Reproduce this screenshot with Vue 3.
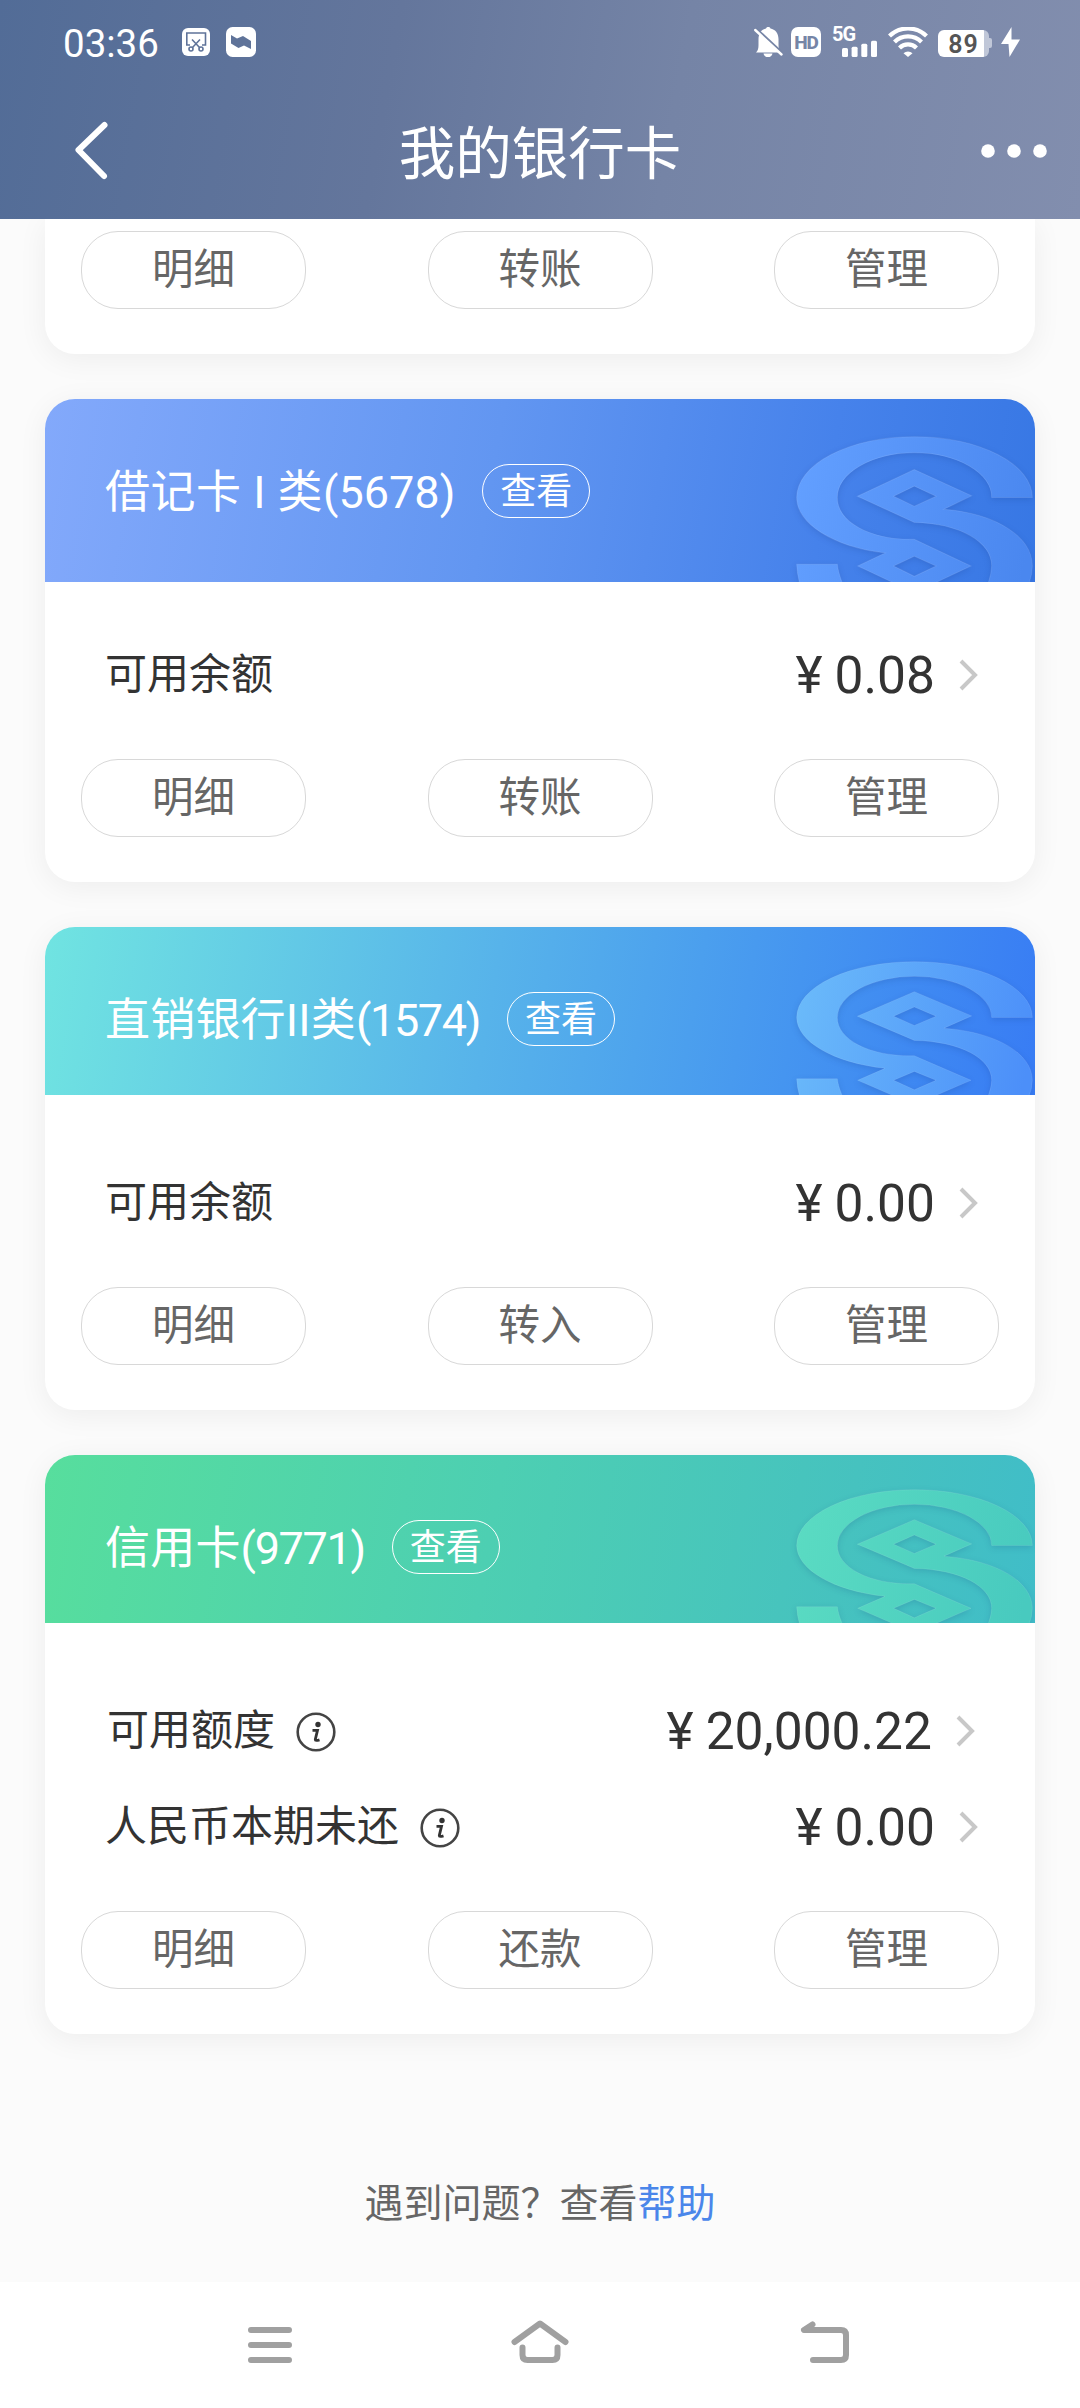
<script setup>
const cards = [
  {
    id: 'debit',
    name: '借记卡 I 类',
    number: '(5678)',
    theme: 'blue',
    rows: [{ label: '可用余额', amount: '0.08' }],
    actions: ['明细', '转账', '管理'],
  },
  {
    id: 'direct',
    name: '直销银行II类',
    number: '(1574)',
    theme: 'cyan',
    rows: [{ label: '可用余额', amount: '0.00' }],
    actions: ['明细', '转入', '管理'],
  },
  {
    id: 'credit',
    name: '信用卡',
    number: '(9771)',
    theme: 'green',
    rows: [
      { label: '可用额度', amount: '20,000.22', info: true, inset: true },
      { label: '人民币本期未还', amount: '0.00', info: true },
    ],
    actions: ['明细', '还款', '管理'],
  },
]
const firstActions = ['明细', '转账', '管理']
</script>

<template>
  <div class="screen">
    <header class="top">
      <div class="status">
        <span class="time">03:36</span>
        <svg class="i-cut" width="28" height="28" viewBox="0 0 28 28">
          <rect width="28" height="28" rx="6" fill="#fff" />
          <g fill="none" stroke="#5f7399" stroke-width="1.6">
            <path d="M8 17H4.800V5H23.500V17H20M10 11.500L18 20M18 11.500L10 20" />
            <circle cx="9" cy="21" r="2" />
            <circle cx="19" cy="21" r="2" />
          </g>
        </svg>
        <svg class="i-app" width="30" height="30" viewBox="0 0 30 30">
          <rect width="30" height="30" rx="6.500" fill="#fff" />
          <path d="M5 8L11 11.500L17 9L25 14V22L18 18.500L12.500 21L5 16.500Z" fill="#5f7399" />
        </svg>
        <div class="status-right">
          <svg width="29" height="30" viewBox="0 0 29 30">
            <path d="M2 25.500C4 23.500 4.500 21.500 4.500 18V12.500C4.500 6 8 2 12 1.400C13 -.4 15.500 -.4 16.500 1.400C21 2.200 24.500 6 24.500 12V18C24.500 21.500 25 23.500 27 25.500ZM9.500 26.500H18.500C17.500 31.500 10.500 31.500 9.500 26.500Z" fill="#fff" />
            <path d="M1.200 .8L28 25.800" stroke="#7685a6" stroke-width="2.600" />
            <path d="M1.200 3L27.500 27.500" stroke="#fff" stroke-width="2.400" stroke-linecap="round" />
          </svg>
          <span class="hd">HD</span>
          <span class="cell">
            <b>5G</b>
            <svg width="36" height="17" viewBox="0 0 36 17" fill="#fff">
              <rect x="0" y="8" width="6" height="9" rx="1.500" />
              <rect x="9.600" y="6.700" width="6" height="10.300" rx="1.500" />
              <rect x="19.300" y="3.700" width="6" height="13.300" rx="1.500" />
              <rect x="29" y=".7" width="6" height="16.300" rx="1.500" />
            </svg>
          </span>
          <svg class="wifi" width="40" height="30" viewBox="0 0 40 30">
            <g fill="none" stroke="#fff" stroke-width="4.200">
              <path d="M1.500 9A26.500 26.500 0 0 1 38.500 9" />
              <path d="M6.500 15A19 19 0 0 1 33.500 15" />
              <path d="M11.500 21A12 12 0 0 1 28.500 21" />
            </g>
            <path d="M20 30L15.500 26.200A6.500 6.500 0 0 1 24.500 26.200Z" fill="#fff" />
          </svg>
          <span class="battery">89</span>
          <svg class="bolt" width="19" height="30" viewBox="0 0 19 30">
            <path d="M10.500 0L0 17H7.500L8.500 30L19 12.500H10.500Z" fill="#fff" />
          </svg>
        </div>
      </div>
      <div class="nav">
        <svg width="40" height="64" viewBox="0 0 40 64" fill="none" stroke="#fff" stroke-width="6" stroke-linecap="round" stroke-linejoin="round">
          <path d="M34.500 6L8.500 31L34 57" />
        </svg>
        <h1>我的银行卡</h1>
        <svg width="66" height="14" viewBox="0 0 66 14" fill="#fff">
          <circle cx="7" cy="7" r="6.800" />
          <circle cx="33" cy="7" r="6.800" />
          <circle cx="59" cy="7" r="6.800" />
        </svg>
      </div>
    </header>

    <main>
      <section class="card cut">
        <div class="actions">
          <button v-for="a in firstActions" :key="a">{{ a }}</button>
        </div>
      </section>

      <section v-for="c in cards" :key="c.id" class="card" :class="c.theme">
        <div class="banner">
          <svg class="emblem" viewBox="165 57 720 548" preserveAspectRatio="none">
            <defs>
              <linearGradient :id="'g-' + c.id" gradientUnits="userSpaceOnUse" x1="170" y1="300" x2="877" y2="450">
                <stop class="from" offset="0" />
                <stop class="to" offset="1" />
              </linearGradient>
            </defs>
            <g :fill="`url(#g-${c.id})`" fill-rule="evenodd" stroke="#fff" stroke-opacity=".1" stroke-width="3">
              <path d="M877 352A353.500 182 0 0 0 170 352C170 430 280 500 435 518L353 557L523 637L693 557L523 477C390 480 292 425 292 352A231.500 134 0 0 1 755 352ZM461 557L523 528L588 557L523 588Z" />
              <path d="M523 268L352 348L523 427C660 430 755 485 755 557Q754 585 740 620H862Q877 590 877 557C877 470 770 400 612 387L695 347ZM461 348L523 318L588 348L523 378Z" />
              <path d="M170 552H292Q295 580 312 620H182Q171 585 170 552Z" />
            </g>
          </svg>
          <h2>{{ c.name }}<span>{{ c.number }}</span></h2>
          <span class="view">查看</span>
        </div>
        <div class="body">
          <div v-for="r in c.rows" :key="r.label" class="row" :class="{ inset: r.inset }">
            <span class="label">{{ r.label }}</span>
            <svg v-if="r.info" class="info" width="40" height="40" viewBox="0 0 40 40">
              <circle cx="20" cy="20" r="18.300" fill="none" stroke="#444" stroke-width="2.600" />
              <circle cx="22" cy="12.500" r="2.700" fill="#333" />
              <path d="M16.500 18.300H21.500L19.300 27.500Q19.200 29.200 23.500 27.800" fill="none" stroke="#333" stroke-width="2.800" />
            </svg>
            <span class="amount"><i>¥</i>{{ r.amount }}</span>
            <svg class="chev" width="20" height="32" viewBox="0 0 20 32" fill="none" stroke="#c8c8c8" stroke-width="4">
              <path d="M2 2L16 16L2 30" />
            </svg>
          </div>
          <div class="actions">
            <button v-for="a in c.actions" :key="a">{{ a }}</button>
          </div>
        </div>
      </section>

      <p class="help">遇到问题？查看<a>帮助</a></p>
    </main>

    <footer class="sysnav">
      <svg width="60" height="60" viewBox="0 0 60 60">
        <path d="M11 15H49M11 30H49M11 45H49" />
      </svg>
      <svg width="60" height="60" viewBox="0 0 60 60">
        <path d="M4.500 27L30 8.500L55.500 27M12.500 32.500V40Q12.500 45 17.500 45H42.500Q47.500 45 47.500 40V32.500" />
      </svg>
      <svg width="60" height="60" viewBox="0 0 60 60">
        <path d="M14.500 9.500L6 15H43Q48 15 48 20V40Q48 45 43 45H15" />
      </svg>
    </footer>
  </div>
</template>

<style>
body {
  margin: 0;
}
</style>

<style scoped>
.screen {
  width: 1080px;
  height: 2408px;
  display: flex;
  flex-direction: column;
  overflow: hidden;
  background: #fbfbfb;
  font-family: Roboto, 'Noto Sans CJK SC', sans-serif;
  color: #333;
}
svg {
  flex: none;
  display: block;
}
.top {
  height: 219px;
  flex: none;
  position: relative;
  z-index: 1;
  background: linear-gradient(100deg, #526c97 0%, #64769c 36%, #7584a6 62%, #828eae 100%);
  color: #fff;
}
.status {
  height: 84px;
  padding: 0 60px 0 63px;
  display: flex;
  align-items: center;
}
.time {
  width: 119px;
  font-size: 38.500px;
  line-height: 46px;
  padding-top: 4px;
  box-sizing: border-box;
}
.i-app {
  margin-left: 16px;
}
.status-right {
  margin-left: auto;
  display: flex;
  align-items: center;
}
.hd {
  width: 30px;
  height: 30px;
  margin-left: 8px;
  border-radius: 7px;
  background: #fff;
  color: #7685a6;
  font-size: 19px;
  line-height: 31px;
  font-weight: 800;
  letter-spacing: -1px;
  text-align: center;
}
.cell {
  height: 30px;
  width: 45px;
  margin-left: 11px;
  display: flex;
  flex-direction: column;
  justify-content: space-between;
}
.cell b {
  font-size: 20px;
  line-height: 15px;
  height: 13px;
  letter-spacing: -1px;
}
.cell svg {
  margin-left: 10px;
}
.wifi {
  margin-left: 11px;
}
.battery {
  box-sizing: border-box;
  width: 51px;
  height: 27px;
  margin: 3px 0 0 10px;
  position: relative;
  border-radius: 6px;
  background: linear-gradient(90deg, #fff 46px, #c0c7d8 46px);
  color: #555;
  font-size: 25px;
  line-height: 29px;
  font-weight: 600;
  letter-spacing: 1px;
  text-align: center;
}
.battery::after {
  content: '';
  position: absolute;
  left: 51px;
  top: 8px;
  width: 3px;
  height: 10px;
  border-radius: 0 2px 2px 0;
  background: #c0c7d8;
}
.bolt {
  margin-left: 12px;
}
.nav {
  height: 135px;
  box-sizing: border-box;
  padding: 0 33px 1px 70px;
  display: flex;
  align-items: center;
}
h1 {
  flex: 1;
  margin: 7px 0 0 -11px;
  text-align: center;
  font-size: 56.500px;
  line-height: 80px;
  font-weight: 400;
}
main {
  flex: 1;
  display: flex;
  flex-direction: column;
  gap: 45px;
  padding: 0 45px;
}
.card {
  flex: none;
  border-radius: 30px;
  background: #fff;
  box-shadow: 0 5px 30px rgba(0, 0, 0, 0.06);
  display: flex;
  flex-direction: column;
  height: 483px;
}
.cut {
  height: 135px;
  border-radius: 0 0 30px 30px;
  justify-content: flex-end;
}
.green {
  height: 579px;
}
.banner {
  flex: none;
  box-sizing: border-box;
  height: 168px;
  padding: 65px 0 0 60px;
  position: relative;
  display: flex;
  align-items: flex-start;
  border-radius: 30px 30px 0 0;
  overflow: hidden;
  color: #fff;
}
.blue .banner {
  height: 183px;
  background: linear-gradient(100deg, #83a9fb 0%, #6296f1 45%, #4682eb 78%, #3777e4 100%);
}
.cyan .banner {
  background: linear-gradient(100deg, #70e4e1 0%, #57b3ea 45%, #4595f0 75%, #387cf4 100%);
}
.green .banner {
  background: linear-gradient(100deg, #57de9d 0%, #4dcfb2 45%, #46c2bf 80%, #40bdc8 100%);
}
.emblem {
  position: absolute;
  right: 0;
  top: 0;
  width: 240px;
  height: 100%;
  filter: drop-shadow(0 2px 3px rgba(0, 30, 100, 0.14));
}
.blue .from { stop-color: #629fff; }
.blue .to { stop-color: #4a87ef; }
.cyan .from { stop-color: #6abafa; }
.cyan .to { stop-color: #4c8ff9; }
.green .from { stop-color: #5adbc2; }
.green .to { stop-color: #48cabf; }
h2 {
  margin: 2px 0 0;
  font-size: 45px;
  line-height: 54px;
  font-weight: 400;
  white-space: pre;
}
.blue h2 {
  letter-spacing: 0.500px;
}
.blue h2 span {
  letter-spacing: 0;
}
.cyan h2 {
  letter-spacing: 0.200px;
}
.green h2 {
  letter-spacing: 0.200px;
}
.cyan h2 span,
.green h2 span {
  letter-spacing: -1.350px;
}
.view {
  box-sizing: border-box;
  width: 108px;
  height: 54px;
  margin-left: 27px;
  border: 1.500px solid #fff;
  border-radius: 27px;
  padding-top: 2px;
  font-size: 36px;
  line-height: 51px;
  text-align: center;
}
.body {
  flex: 1;
  display: flex;
  flex-direction: column;
  justify-content: flex-end;
}
.row {
  height: 96px;
  padding: 0 56px 0 60px;
  display: flex;
  align-items: center;
}
.row.inset {
  padding: 0 59px 0 62px;
}
.label {
  font-size: 42px;
  line-height: 60px;
}
.info {
  margin: 1px 0 0 21px;
}
.amount {
  margin-left: auto;
  margin-top: 1px;
  font-size: 51.500px;
  line-height: 60px;
}
.amount i {
  font-style: normal;
  margin-right: 12px;
}
.chev {
  margin-left: 24px;
}
.actions {
  display: flex;
  justify-content: space-between;
  padding: 36px 36px 45px;
}
.actions button {
  box-sizing: border-box;
  width: 225px;
  height: 78px;
  padding: 0;
  border: 1px solid #d8d8d8;
  border-radius: 37px;
  background: #fff;
  color: #666;
  font-family: inherit;
  font-size: 41.500px;
  line-height: 60px;
}
.help {
  margin: 100px 0 0;
  text-align: center;
  font-size: 39px;
  line-height: 50px;
  color: #666;
}
.help a {
  color: #4a86ea;
}
.sysnav {
  flex: none;
  height: 126px;
  padding: 0 223px 0 240px;
  display: flex;
  align-items: center;
  gap: 210px;
  background: #fff;
}
.sysnav svg {
  fill: none;
  stroke: #a0a0a0;
  stroke-width: 6;
  stroke-linecap: round;
  stroke-linejoin: round;
}
.sysnav svg:last-child {
  margin-left: 18px;
}
</style>
